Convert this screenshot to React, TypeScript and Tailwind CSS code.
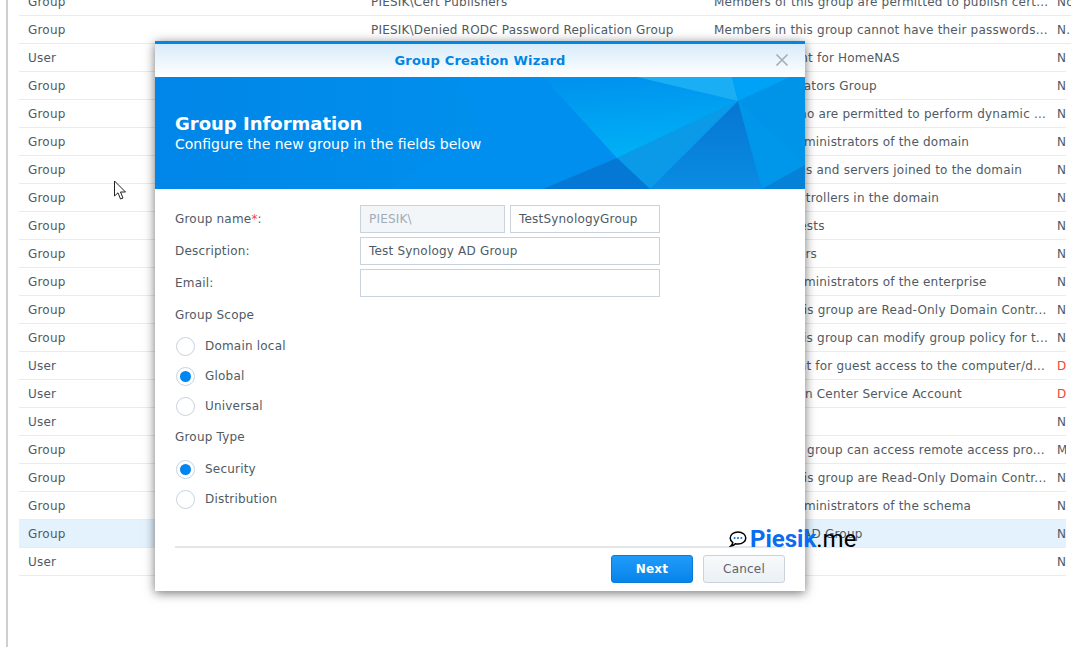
const font = "font-['DejaVu_Sans','Liberation_Sans',sans-serif]";

type Row = { type: string; name: string; desc: string; status: string; red?: boolean; selected?: boolean; width: string };

const rows: Row[] = [
  { type: 'Group', name: 'PIESIK\\Cert Publishers', desc: 'Members of this group are permitted to publish cert...', status: 'No', width: 'w-[1052px]' },
  { type: 'Group', name: 'PIESIK\\Denied RODC Password Replication Group', desc: 'Members in this group cannot have their passwords...', status: 'N.', width: 'w-[1052px]' },
  { type: 'User', name: 'PIESIK\\HomeNAS', desc: 'Service account for HomeNAS', status: 'No', width: 'w-[1047px]' },
  { type: 'Group', name: 'PIESIK\\DnsAdmins', desc: 'DNS Administrators Group', status: 'No', width: 'w-[1047px]' },
  { type: 'Group', name: 'PIESIK\\DnsUpdateProxy', desc: 'DNS clients who are permitted to perform dynamic ...', status: 'No', width: 'w-[1047px]' },
  { type: 'Group', name: 'PIESIK\\Domain Admins', desc: 'Designated administrators of the domain', status: 'No', width: 'w-[1047px]' },
  { type: 'Group', name: 'PIESIK\\Domain Computers', desc: 'All workstations and servers joined to the domain', status: 'N', width: 'w-[1047px]' },
  { type: 'Group', name: 'PIESIK\\Domain Controllers', desc: 'All domain controllers in the domain', status: 'No', width: 'w-[1047px]' },
  { type: 'Group', name: 'PIESIK\\Domain Guests', desc: 'All domain guests', status: 'No', width: 'w-[1047px]' },
  { type: 'Group', name: 'PIESIK\\Domain Users', desc: 'All domain users', status: 'N', width: 'w-[1047px]' },
  { type: 'Group', name: 'PIESIK\\Enterprise Admins', desc: 'Designated administrators of the enterprise', status: 'N', width: 'w-[1047px]' },
  { type: 'Group', name: 'PIESIK\\Enterprise Read-only', desc: 'Members of this group are Read-Only Domain Contr...', status: 'N', width: 'w-[1047px]' },
  { type: 'Group', name: 'PIESIK\\Group Policy Creator', desc: 'Members in this group can modify group policy for t...', status: 'N', width: 'w-[1047px]' },
  { type: 'User', name: 'PIESIK\\Guest', desc: 'Built-in account for guest access to the computer/d...', status: 'D', red: true, width: 'w-[1047px]' },
  { type: 'User', name: 'PIESIK\\krbtgt', desc: 'Key Distribution Center Service Account', status: 'D', red: true, width: 'w-[1047px]' },
  { type: 'User', name: 'PIESIK\\piesik', desc: 'Piesik Data', status: 'No', width: 'w-[1047px]' },
  { type: 'Group', name: 'PIESIK\\RAS and IAS Servers', desc: 'Servers in this group can access remote access pro...', status: 'M', width: 'w-[1047px]' },
  { type: 'Group', name: 'PIESIK\\Read-only Controllers', desc: 'Members of this group are Read-Only Domain Contr...', status: 'No', width: 'w-[1047px]' },
  { type: 'Group', name: 'PIESIK\\Schema Admins', desc: 'Designated administrators of the schema', status: 'No', width: 'w-[1047px]' },
  { type: 'Group', name: 'PIESIK\\TestSynologyGroup', desc: 'Test Synology AD Group', status: 'N', selected: true, width: 'w-[1047px]' },
  { type: 'User', name: 'PIESIK\\testuser', desc: 'Test user', status: 'N', width: 'w-[1047px]' },
];

function Radio({ label, checked }: { label: string; checked?: boolean }) {
  return (
    <label className="flex h-[30px] items-center gap-[10px] pl-px">
      <span className="flex h-[19px] w-[19px] items-center justify-center rounded-full border border-[#c8d3de] bg-white">
        {checked && <span className="h-[11px] w-[11px] rounded-full bg-[#0086f0]" />}
      </span>
      <span>{label}</span>
    </label>
  );
}

function FieldLabel({ children }: { children: React.ReactNode }) {
  return <div className="flex h-[28px] w-[185px] shrink-0 items-center">{children}</div>;
}

function Banner() {
  return (
    <svg className="absolute inset-0 h-full w-full" viewBox="0 0 650 112" preserveAspectRatio="none">
      <defs>
        <linearGradient id="bg" x1="0" x2="1" y1="0" y2="0">
          <stop offset="0" stopColor="#0086e8" />
          <stop offset="1" stopColor="#0098f0" />
        </linearGradient>
        <linearGradient id="band" x1="0.3" x2="0.5" y1="0" y2="1">
          <stop offset="0" stopColor="#0092ee" />
          <stop offset="1" stopColor="#00b2f6" />
        </linearGradient>
        <linearGradient id="dark" x1="0.5" x2="0.5" y1="0" y2="1">
          <stop offset="0" stopColor="#0676d2" />
          <stop offset="1" stopColor="#0a8ce2" />
        </linearGradient>
      </defs>
      <rect width="650" height="112" fill="url(#bg)" />
      <polygon points="302,0 388,0 462,81 388,112 235,112 325,48" fill="#008fee" />
      <polygon points="388,0 482,0 583,24 462,81" fill="url(#band)" />
      <polygon points="482,0 577,0 583,24" fill="#1aaef5" />
      <polygon points="577,0 635,0 583,24" fill="#00a2f7" />
      <polygon points="635,0 650,0 650,88 583,24" fill="#0094e8" />
      <polygon points="462,81 583,24 495,112" fill="#0a9ae8" />
      <polygon points="583,24 495,112 607,112" fill="url(#dark)" />
      <polygon points="583,24 650,88 607,112" fill="#0096ea" />
      <polygon points="650,88 607,112 650,112" fill="#0582d8" />
      <polygon points="462,81 388,112 495,112" fill="#0478d4" />
    </svg>
  );
}

export default function App() {
  return (
    <div className={`relative h-[667px] w-[1076px] overflow-hidden bg-white text-[12px] tracking-[0.2px] text-[#505a64] ${font}`}>
      {/* Group list behind the dialog */}
      <div className="ml-[6px] h-[659px] border-l-2 border-[#cfcfcf] pl-[11px]">
        <div className="-mt-[12px]">
          {rows.map((row) => (
            <div
              key={row.desc + row.type}
              className={`flex h-[28px] items-center overflow-hidden border-b border-[#e6ecf2] pl-[9px] ${row.width} ${row.selected ? 'bg-[#e3f2fd]' : ''}`}
            >
              <span className="w-[343px] shrink-0">{row.type}</span>
              <span className="w-[343px] shrink-0 whitespace-nowrap">{row.name}</span>
              <span className="w-[343px] shrink-0 whitespace-nowrap">{row.desc}</span>
              <span className={`shrink-0 ${row.red ? 'text-[#f44336]' : ''}`}>{row.status}</span>
            </div>
          ))}
        </div>
      </div>

      {/* Wizard dialog */}
      <div className="absolute left-[155px] top-[41px] flex h-[550px] w-[650px] flex-col border-t-[3px] border-[#0086e5] bg-white shadow-[0_2px_10px_rgba(0,0,0,0.55)]">
        <div className="relative flex h-[33px] shrink-0 items-center justify-center bg-gradient-to-b from-[#d8ebfa] to-white text-[13px] font-bold text-[#0086e5]">
          Group Creation Wizard
          <svg className="absolute right-[16px] top-[9px] h-[14px] w-[14px]" viewBox="0 0 14 14">
            <path d="M1.5 1.5 L12.5 12.5 M12.5 1.5 L1.5 12.5" stroke="#a5adb5" strokeWidth="1.6" fill="none" />
          </svg>
        </div>
        <div className="relative h-[112px] shrink-0 overflow-hidden">
          <Banner />
          <div className="relative px-[20px] pt-[37px] text-white">
            <div className="text-[18px] font-bold leading-[20px] tracking-normal">Group Information</div>
            <div className="text-[14px] leading-[20px] tracking-normal">Configure the new group in the fields below</div>
          </div>
        </div>

        <div className="flex flex-1 flex-col px-[20px] pt-[16px]">
          <div className="flex gap-0">
            <FieldLabel>
              Group name<span className="text-[#f44336]">*</span>:
            </FieldLabel>
            <div className="flex gap-[5px]">
              <div className="flex h-[28px] w-[145px] items-center border border-[#c8d3de] bg-[#f3f6f9] px-[8px] text-[#a0abb6]">PIESIK\</div>
              <div className="flex h-[28px] w-[150px] items-center border border-[#c8d3de] px-[8px]">TestSynologyGroup</div>
            </div>
          </div>
          <div className="mt-[4px] flex">
            <FieldLabel>Description:</FieldLabel>
            <div className="flex h-[28px] w-[300px] items-center border border-[#c8d3de] px-[8px]">Test Synology AD Group</div>
          </div>
          <div className="mt-[4px] flex">
            <FieldLabel>Email:</FieldLabel>
            <div className="h-[28px] w-[300px] border border-[#c8d3de]" />
          </div>
          <div className="mt-[4px] flex h-[28px] items-center">Group Scope</div>
          <div className="mt-[2px]">
            <Radio label="Domain local" />
            <Radio label="Global" checked />
            <Radio label="Universal" />
          </div>
          <div className="flex h-[32px] items-center">Group Type</div>
          <div className="mt-[1px]">
            <Radio label="Security" checked />
            <Radio label="Distribution" />
          </div>

          <div className="mt-auto flex h-[45px] justify-end gap-[10px] border-t-2 border-[#e3e6e9] pt-[7px]">
            <button className="h-[28px] w-[82px] rounded-[3px] border border-[#0a7bd8] bg-gradient-to-b from-[#1f9bfa] to-[#0584ea] font-bold text-white">Next</button>
            <button className="h-[28px] w-[82px] rounded-[3px] border border-[#c8d3de] bg-gradient-to-b from-[#f8fafc] to-[#ebf0f5] text-[#5a646e]">Cancel</button>
          </div>
        </div>
      </div>

      {/* Watermark */}
      <div className="absolute left-[729px] top-[525px] flex items-center gap-[3px] font-['Roboto',sans-serif] text-[24px] leading-[28px] tracking-normal text-black">
        <svg className="h-[18px] w-[18px]" viewBox="0 0 18 18">
          <path d="M9 2 C4.5 2 1.2 4.6 1.2 8 C1.2 9.9 2.2 11.5 3.8 12.6 C3.6 14 2.8 15.2 1.8 16 C3.8 15.8 5.4 15 6.4 13.8 C7.2 14 8.1 14 9 14 C13.5 14 16.8 11.4 16.8 8 C16.8 4.6 13.5 2 9 2 Z" fill="white" stroke="black" strokeWidth="1.5" />
          <circle cx="5.6" cy="8" r="1" fill="#0a6cf0" />
          <circle cx="9" cy="8" r="1" fill="#0a6cf0" />
          <circle cx="12.4" cy="8" r="1" fill="#0a6cf0" />
        </svg>
        <span>
          <span className="font-bold text-[#0a6cf0]">Piesik</span>.me
        </span>
      </div>

      {/* Mouse pointer */}
      <svg className="absolute left-[113px] top-[180px] h-[22px] w-[14px]" viewBox="0 0 14 22">
        <path d="M1.5 1 L1.5 16 L5 12.8 L7.5 19 L10 18 L7.5 12 L12.5 12 Z" fill="white" stroke="#222" strokeWidth="1" />
      </svg>
    </div>
  );
}
